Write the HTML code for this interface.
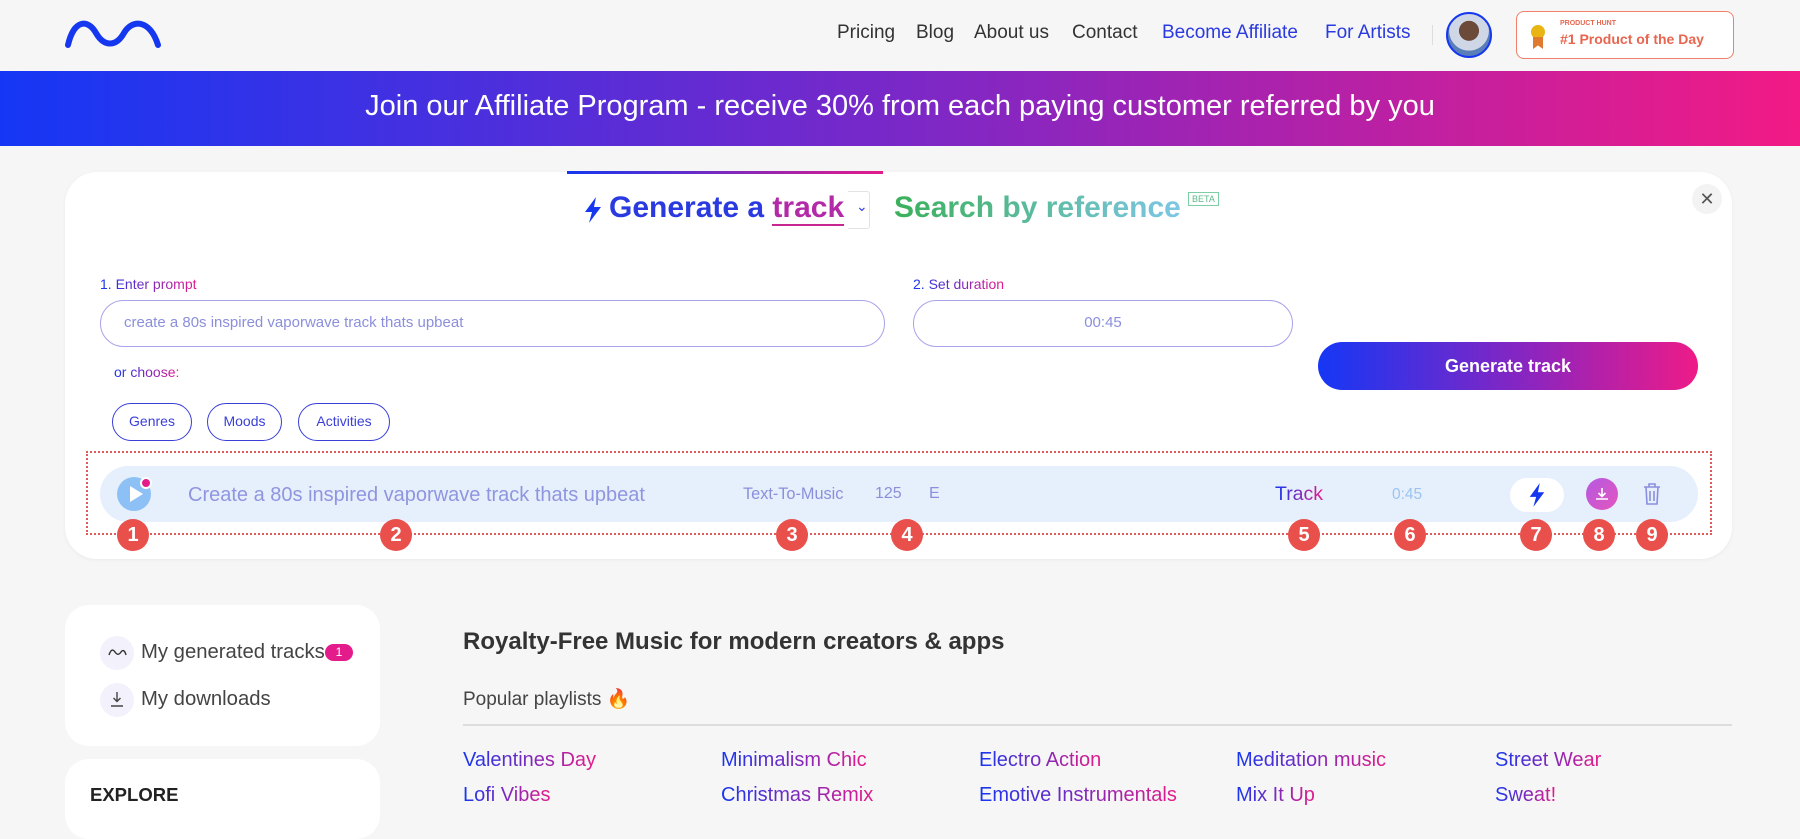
<!DOCTYPE html>
<html><head><meta charset="utf-8">
<style>
*{box-sizing:border-box;margin:0;padding:0}
body{width:1800px;height:816px;overflow:hidden;background:#f6f6f6;font-family:"Liberation Sans",sans-serif;position:relative;color:#333}
.a{position:absolute;white-space:nowrap}
.nav{top:22px;font-size:19px;color:#333}
.grad{background:linear-gradient(90deg,#1537f0,#e41b8a);-webkit-background-clip:text;background-clip:text;color:transparent}
.num{position:absolute;width:32px;height:32px;border-radius:50%;background:#e9504c;color:#fff;font-weight:bold;font-size:20px;text-align:center;line-height:32px;top:519px}
.chip{position:absolute;top:403px;height:38px;border:1.5px solid #3a3fd8;border-radius:19px;color:#3a3fd8;font-size:14px;line-height:35px;text-align:center;background:#fff}
.pl{font-size:20px}
</style></head><body>
<svg class="a" style="left:64px;top:19px" width="98" height="30" viewBox="0 0 98 30"><path d="M4 26 C10 0,24 0,32 14 C40 28,52 28,60 14 C68 0,86 0,94 26" fill="none" stroke="#1537f0" stroke-width="6" stroke-linecap="round"/></svg>
<div class="a nav" style="left:837px">Pricing</div>
<div class="a nav" style="left:916px">Blog</div>
<div class="a nav" style="left:974px">About us</div>
<div class="a nav" style="left:1072px">Contact</div>
<div class="a nav" style="left:1162px;color:#2a3ae0">Become Affiliate</div>
<div class="a nav" style="left:1325px;color:#2a3ae0">For Artists</div>
<div class="a" style="left:1432px;top:25px;width:1px;height:20px;background:#ddd"></div>
<div class="a" style="left:1446px;top:12px;width:46px;height:46px;border-radius:50%;border:2px solid #1537f0;background:radial-gradient(circle at 50% 40%,#6b4a3a 0 30%,#cfd6e6 31% 60%,#5a7fb8 61%)"></div>
<div class="a" style="left:1516px;top:11px;width:218px;height:48px;border:1.5px solid #f27f6a;border-radius:8px;background:#fff"></div>
<div class="a" style="left:1531px;top:25px;width:14px;height:14px;border-radius:50%;background:#e8b515"></div>
<div class="a" style="left:1533px;top:37px;width:10px;height:12px;background:#e07a2f;clip-path:polygon(0 0,100% 0,100% 100%,50% 70%,0 100%)"></div>
<div class="a" style="left:1560px;top:20px;font-size:7px;font-weight:bold;color:#e8654f">PRODUCT HUNT</div>
<div class="a" style="left:1560px;top:31px;font-size:14px;font-weight:bold;color:#e8654f">#1 Product of the Day</div>

<div class="a" style="left:0;top:71px;width:1800px;height:75px;background:linear-gradient(90deg,#1537f5,#7a28c8 50%,#f21a85)"></div>
<div class="a" style="left:0;top:90px;width:1800px;text-align:center;color:#fff;font-size:29px">Join our Affiliate Program - receive 30% from each paying customer referred by you</div>

<div class="a" style="left:65px;top:172px;width:1667px;height:387px;background:#fff;border-radius:32px;box-shadow:0 1px 4px rgba(0,0,0,.05)"></div>
<div class="a" style="left:567px;top:171px;width:316px;height:3px;background:linear-gradient(90deg,#1537f0,#e41b8a)"></div>
<svg class="a" style="left:582px;top:196px" width="22" height="28" viewBox="0 0 22 28"><path d="M14 1 L3 16 H10 L7 27 L19 11 H12 Z" fill="#1537f0"/></svg>
<div class="a" style="left:609px;top:191px;font-size:30px;font-weight:bold;color:#2a3ae0">Generate a <span style="color:#b32aa8;border-bottom:2px solid #c7268f">track</span></div>
<div class="a" style="left:772px;top:191px;width:98px;height:38px;border:1px solid #e3e3e3;border-radius:3px;border-left:none;clip-path:inset(0 0 0 76px)"></div>
<div class="a" style="left:856px;top:198px;font-size:14px;color:#2a3ae0">&#8964;</div>
<div class="a grad" style="left:894px;top:191px;font-size:30px;font-weight:bold;background-image:linear-gradient(90deg,#3bb05a,#7ec6e6)">Search by reference</div>
<div class="a" style="left:1188px;top:192px;font-size:9px;color:#5fb98a;border:1px solid #7ccfa4;padding:0 3px;line-height:12px">BETA</div>
<div class="a" style="left:1692px;top:184px;width:30px;height:30px;border-radius:50%;background:#f3f3f3;text-align:center;line-height:30px;font-size:18px;color:#555">&#x2715;</div>

<div class="a grad" style="left:100px;top:276px;font-size:14px">1. Enter prompt</div>
<div class="a" style="left:100px;top:300px;width:785px;height:47px;border:1.5px solid #a9a3ea;border-radius:24px"></div>
<div class="a" style="left:124px;top:314px;font-size:15px;color:#8b8fdc">create a 80s inspired vaporwave track thats upbeat</div>
<div class="a grad" style="left:913px;top:276px;font-size:14px">2. Set duration</div>
<div class="a" style="left:913px;top:300px;width:380px;height:47px;border:1.5px solid #a9a3ea;border-radius:24px;text-align:center;line-height:44px;font-size:15px;color:#8b8fdc">00:45</div>
<div class="a" style="left:1318px;top:342px;width:380px;height:48px;border-radius:24px;background:linear-gradient(90deg,#1537f5,#8a25c0 55%,#ee1b88);color:#fff;font-size:18px;font-weight:bold;text-align:center;line-height:48px">Generate track</div>
<div class="a grad" style="left:114px;top:364px;font-size:14px">or choose:</div>
<div class="chip" style="left:112px;width:80px">Genres</div>
<div class="chip" style="left:207px;width:75px">Moods</div>
<div class="chip" style="left:298px;width:92px">Activities</div>

<div class="a" style="left:86px;top:451px;width:1626px;height:84px;border:2px dotted #e05a5a"></div>
<div class="a" style="left:100px;top:466px;width:1598px;height:56px;border-radius:28px;background:#e6effc"></div>
<div class="a" style="left:117px;top:477px;width:34px;height:34px;border-radius:50%;background:#8dc0f4"></div>
<div class="a" style="left:130px;top:486px;width:0;height:0;border-left:13px solid #fff;border-top:8px solid transparent;border-bottom:8px solid transparent"></div>
<div class="a" style="left:140px;top:477px;width:12px;height:12px;border-radius:50%;background:#e41b8a;border:2px solid #fff"></div>
<div class="a" style="left:188px;top:484px;font-size:20px;color:#9095e0">Create a 80s inspired vaporwave track thats upbeat</div>
<div class="a" style="left:743px;top:485px;font-size:16.3px;color:#8a8fdc">Text-To-Music</div>
<div class="a" style="left:875px;top:485px;font-size:16px;color:#8a8fdc">125</div>
<div class="a" style="left:929px;top:485px;font-size:16px;color:#8a8fdc">E</div>
<div class="a grad" style="left:1275px;top:483px;font-size:19.5px">Track</div>
<div class="a" style="left:1392px;top:486px;font-size:15.5px;color:#9cc4f0">0:45</div>
<div class="a" style="left:1510px;top:478px;width:54px;height:34px;border-radius:17px;background:#fff"></div>
<svg class="a" style="left:1527px;top:482px" width="20" height="26" viewBox="0 0 22 28"><path d="M14 1 L3 16 H10 L7 27 L19 11 H12 Z" fill="#1537f0"/></svg>
<div class="a" style="left:1586px;top:478px;width:32px;height:32px;border-radius:50%;background:linear-gradient(135deg,#b45ae0,#e455c0)"></div>
<svg class="a" style="left:1594px;top:486px" width="16" height="16" viewBox="0 0 16 16"><path d="M8 2v8M4.5 7 8 10.5 11.5 7M2 13h12" stroke="#fff" stroke-width="1.6" fill="none"/></svg>
<svg class="a" style="left:1642px;top:482px" width="20" height="24" viewBox="0 0 20 24"><path d="M2 5h16M7 5V2h6v3M4 5l1 17h10l1-17M8 9v10M12 9v10" stroke="#8a8fdc" stroke-width="1.6" fill="none"/></svg>

<div class="num" style="left:117px">1</div>
<div class="num" style="left:380px">2</div>
<div class="num" style="left:776px">3</div>
<div class="num" style="left:891px">4</div>
<div class="num" style="left:1288px">5</div>
<div class="num" style="left:1394px">6</div>
<div class="num" style="left:1520px">7</div>
<div class="num" style="left:1583px">8</div>
<div class="num" style="left:1636px">9</div>

<div class="a" style="left:65px;top:605px;width:315px;height:141px;background:#fff;border-radius:24px"></div>
<div class="a" style="left:100px;top:636px;width:34px;height:34px;border-radius:50%;background:#f3f1fb"></div>
<svg class="a" style="left:107px;top:647px" width="20" height="10" viewBox="0 0 20 10"><path d="M2 8 C4 2,6 2,8 5 C10 8,12 8,14 5 C16 2,18 4,19 8" fill="none" stroke="#333" stroke-width="1.4"/></svg>
<div class="a" style="left:141px;top:641px;font-size:20.3px;color:#444">My generated tracks</div>
<div class="a" style="left:325px;top:644px;width:28px;height:17px;border-radius:9px;background:#e41b8a;color:#fff;font-size:12px;text-align:center;line-height:17px">1</div>
<div class="a" style="left:100px;top:683px;width:34px;height:34px;border-radius:50%;background:#f3f1fb"></div>
<svg class="a" style="left:109px;top:690px" width="16" height="18" viewBox="0 0 16 18"><path d="M8 2v9M4.5 8 8 11.5 11.5 8M2 16h12" stroke="#444" stroke-width="1.4" fill="none"/></svg>
<div class="a" style="left:141px;top:688px;font-size:20.3px;color:#444">My downloads</div>
<div class="a" style="left:65px;top:759px;width:315px;height:80px;background:#fff;border-radius:24px"></div>
<div class="a" style="left:90px;top:784px;font-size:18.5px;font-weight:bold;color:#222">EXPLORE</div>

<div class="a" style="left:463px;top:628px;font-size:24px;font-weight:bold;color:#333">Royalty-Free Music for modern creators &amp; apps</div>
<div class="a" style="left:463px;top:687px;font-size:19px;color:#444">Popular playlists <span style="color:#f08a1a">&#128293;</span></div>
<div class="a" style="left:463px;top:724px;width:1269px;height:2px;background:#ddd"></div>
<div class="a grad pl" style="left:463px;top:749px">Valentines Day</div>
<div class="a grad pl" style="left:721px;top:749px">Minimalism Chic</div>
<div class="a grad pl" style="left:979px;top:749px">Electro Action</div>
<div class="a grad pl" style="left:1236px;top:749px">Meditation music</div>
<div class="a grad pl" style="left:1495px;top:749px">Street Wear</div>
<div class="a grad pl" style="left:463px;top:784px">Lofi Vibes</div>
<div class="a grad pl" style="left:721px;top:784px">Christmas Remix</div>
<div class="a grad pl" style="left:979px;top:784px">Emotive Instrumentals</div>
<div class="a grad pl" style="left:1236px;top:784px">Mix It Up</div>
<div class="a grad pl" style="left:1495px;top:784px">Sweat!</div>
</body></html>
